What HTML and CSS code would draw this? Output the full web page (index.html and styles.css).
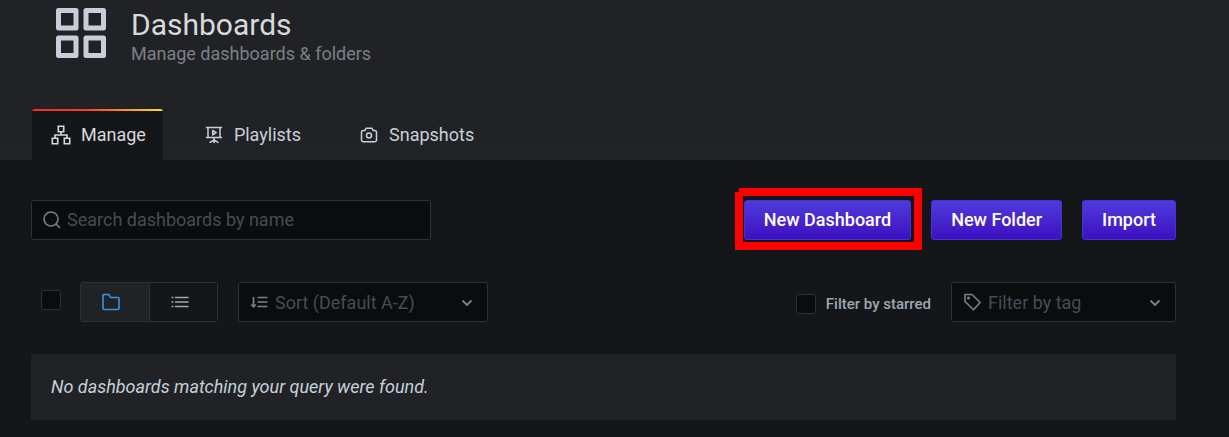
FILE: index.html
```html
<!DOCTYPE html>
<html lang="en">
<head>
<meta charset="utf-8">
<title>Dashboards</title>
<link rel="stylesheet" href="styles.css">
</head>
<body>
<header class="page-header">
  <div class="heading">
    <svg class="heading-icon" viewBox="0 0 50 50" fill="none" stroke="currentColor" stroke-width="5" stroke-linejoin="round" aria-hidden="true">
      <path d="M2.500 2.500h17.500v17.500H2.500zM30 2.500h17.500v17.500H30zM2.500 30h17.500v17.500H2.500zM30 30h17.500v17.500H30z"/>
    </svg>
    <div>
      <h1 class="title">Dashboards</h1>
      <p class="subtitle">Manage dashboards &amp; folders</p>
    </div>
  </div>
  <nav class="tabs">
    <a class="tab tab-active" href="#manage">
      <svg class="icon" viewBox="0 0 20 20" fill="none" stroke="currentColor" stroke-width="1.600" aria-hidden="true">
        <path d="M7.300 1.300h5.400v5.400H7.300zM1.300 13.300h5.400v5.400H1.300zM13.300 13.300h5.400v5.400h-5.400zM10 6.700V10M4 13.300V10h12v3.300"/>
      </svg>
      Manage
    </a>
    <a class="tab" href="#playlists">
      <svg class="icon" viewBox="0 0 20 20" fill="none" stroke="currentColor" stroke-width="1.500" stroke-linecap="round" stroke-linejoin="round" aria-hidden="true">
        <path d="M2.500 2.500h15M4 2.500v10h12v-10M2.500 12.500h15M10 12.500v5M10 15l-4 2.300M10 15l4 2.300M8.700 5.500v4.400l3.500-2.200z"/>
      </svg>
      Playlists
    </a>
    <a class="tab" href="#snapshots">
      <svg class="icon" viewBox="0 0 20 20" fill="none" stroke="currentColor" stroke-width="1.500" stroke-linejoin="round" aria-hidden="true">
        <path d="M4.300 5.500H6l1-2.300h6l1 2.300h1.700a1.800 1.800 0 0 1 1.800 1.800V15a1.800 1.800 0 0 1-1.800 1.800H4.300A1.800 1.800 0 0 1 2.500 15V7.300a1.800 1.800 0 0 1 1.800-1.800z"/>
        <circle cx="10" cy="10.500" r="2.500"/>
      </svg>
      Snapshots
    </a>
  </nav>
</header>
<main class="content">
  <div class="row actions">
    <label class="field search">
      <svg class="icon field-icon" viewBox="0 0 20 20" fill="none" stroke="currentColor" stroke-width="1.600" stroke-linecap="round" aria-hidden="true">
        <circle cx="9" cy="9" r="7"/><path d="M14 14l3.500 3.500"/>
      </svg>
      <input class="control" type="text" placeholder="Search dashboards by name" aria-label="Search dashboards by name">
    </label>
    <div class="buttons">
      <div class="highlight"><button class="button" type="button">New Dashboard</button></div>
      <button class="button" type="button">New Folder</button>
      <button class="button" type="button">Import</button>
    </div>
  </div>
  <div class="row filters">
    <input class="checkbox select-all" type="checkbox" aria-label="Select all">
    <div class="layout-switch">
      <button class="switch switch-on" type="button" aria-label="View by folders">
        <svg class="icon" viewBox="0 0 20 20" fill="none" stroke="currentColor" stroke-width="1.600" stroke-linejoin="round" aria-hidden="true">
          <path d="M3 2.500h5l1.500 3H17q1 0 1 1V16q0 1.500-1.500 1.500h-13Q2 17.500 2 16V3.500q0-1 1-1z"/>
        </svg>
      </button>
      <button class="switch" type="button" aria-label="View as list">
        <svg class="icon" viewBox="0 0 20 20" fill="none" stroke="currentColor" stroke-width="1.700" aria-hidden="true">
          <path d="M1.500 5.500h2M5 5.500h13.500M1.500 10h2M5 10h13.500M1.500 14.500h2M5 14.500h13.500"/>
        </svg>
      </button>
    </div>
    <label class="field sort">
      <svg class="icon field-icon" viewBox="0 0 20 20" fill="none" stroke="currentColor" stroke-width="1.700" aria-hidden="true">
        <path d="M4.500 5v9M8.500 5.500h10M8.500 10h10M8.500 14.500h10"/><path d="M2.300 12.500l2.200 2.200 2.200-2.200"/>
      </svg>
      <select class="control select" aria-label="Sort"><option>Sort (Default A-Z)</option></select>
      <svg class="icon chevron" viewBox="0 0 20 20" fill="none" stroke="currentColor" stroke-width="1.800" stroke-linecap="round" stroke-linejoin="round" aria-hidden="true"><path d="M6 9l4 4 4-4"/></svg>
    </label>
    <label class="starred"><input class="checkbox" type="checkbox">Filter by starred</label>
    <label class="field tag">
      <svg class="icon field-icon" viewBox="0 0 20 20" fill="none" stroke="currentColor" stroke-width="1.600" stroke-linejoin="round" aria-hidden="true">
        <path d="M3 2.500h7l8.200 8-6.700 7.300L3 9.500z"/><circle cx="6.500" cy="6" r=".7" fill="currentColor"/>
      </svg>
      <select class="control select" aria-label="Filter by tag"><option>Filter by tag</option></select>
      <svg class="icon chevron" viewBox="0 0 20 20" fill="none" stroke="currentColor" stroke-width="1.800" stroke-linecap="round" stroke-linejoin="round" aria-hidden="true"><path d="M6 9l4 4 4-4"/></svg>
    </label>
  </div>
  <p class="empty"><em>No dashboards matching your query were found.</em></p>
</main>
</body>
</html>
```

FILE: styles.css
```css
* { box-sizing: border-box; }

body {
  margin: 0;
  background: #141619;
  color: #c7d0d9;
  font: 18px/24px Roboto, "Liberation Sans", sans-serif;
}

.page-header {
  padding: 8px 53px 0 32px;
  background: linear-gradient(#202226, #202226 80%, #222325);
}

.heading {
  display: flex;
  gap: 25px;
  height: 101px;
  padding-left: 24px;
}

.heading-icon {
  width: 50px;
  height: 50px;
  color: #c7cdd9;
}

.title {
  margin: 0;
  color: #d8d9da;
  font-size: 30px;
  line-height: 34px;
  font-weight: 400;
}

.subtitle {
  margin: 0;
  color: #7b8087;
}

.tabs {
  display: flex;
  gap: 22px;
}

.tab {
  display: flex;
  align-items: center;
  gap: 10px;
  height: 51px;
  padding: 0 17px 0 19px;
  color: #c7d0d9;
  text-decoration: none;
}

.tab-active {
  border-radius: 3px 3px 0 0;
  background: linear-gradient(90deg, #f22b2b, #ff3a24 40%, #fade2a) top / 100% 2px no-repeat #141619;
  color: #d8d9da;
}

.icon {
  flex: none;
  width: 20px;
  height: 20px;
}

.content { padding: 40px 53px 17px 31px; }

.row {
  display: flex;
  align-items: center;
}

.actions {
  justify-content: space-between;
  margin-bottom: 42px;
}

.field {
  display: grid;
  align-items: center;
  height: 40px;
  color: #7b8087;
}

.field > * { grid-area: 1 / 1; }

.field-icon {
  z-index: 1;
  margin-left: 11px;
  pointer-events: none;
}

.chevron {
  justify-self: end;
  margin-right: 11px;
  pointer-events: none;
}

.control {
  width: 100%;
  height: 40px;
  padding: 0 36px 2px 35px;
  border: 1px solid #2c3235;
  border-radius: 3px;
  background: #0b0c0e;
  color: #464c54;
  font: inherit;
  appearance: none;
}

.select { padding: 2px 36px 0 36px; }

.control::placeholder { color: #464c54; }

.search { width: 400px; }

.buttons {
  display: flex;
  gap: 20px;
}

.button {
  height: 40px;
  padding: 0 19px;
  border: 1px solid #4432d8;
  border-radius: 3px;
  background: linear-gradient(#4f3bdc, #3d10c0);
  color: #fff;
  font: inherit;
  font-weight: 500;
}

.highlight { position: relative; }

.highlight::after {
  content: "";
  position: absolute;
  inset: -12px -11px -10px -9px;
  border: 8px solid #f00;
  clip-path: polygon(4px 0, 100% 0, 100% 100%, 0 100%, 0 4px, 4px 4px);
  pointer-events: none;
}

.filters {
  margin-bottom: 32px;
  padding-left: 10px;
}

.checkbox {
  width: 20px;
  height: 20px;
  margin: 0;
  border: 1px solid #2c3235;
  border-radius: 3px;
  background: #0b0c0e;
  appearance: none;
}

.select-all { margin: 0 19px 4px 0; }

.layout-switch {
  display: flex;
  margin-right: 20px;
  border: 1px solid #2c3235;
  border-radius: 3px;
}

.switch {
  display: grid;
  place-items: center;
  width: 67px;
  height: 38px;
  padding: 0 8px 0 0;
  border: 0;
  background: #141619;
  color: #9fa7b3;
}

.switch-on {
  width: 69px;
  border-right: 1px solid #2c3235;
  background: #202226;
  color: #3795e5;
}

.sort { width: 250px; }

.starred {
  display: flex;
  align-items: center;
  gap: 10px;
  margin: 4px 20px 0 auto;
  color: #9fa7b3;
  font-size: 15px;
  line-height: 20px;
  font-weight: 500;
}

.tag { width: 225px; }

.empty {
  margin: 0;
  padding: 21px 20px;
  background: #202226;
}
```
